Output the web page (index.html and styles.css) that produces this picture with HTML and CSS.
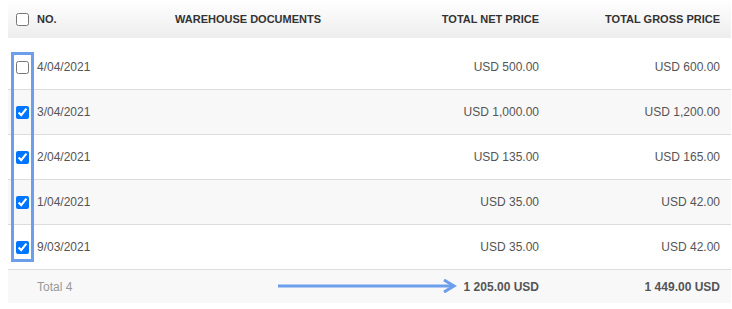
FILE: index.html
```html
<!DOCTYPE html>
<html>
<head>
<meta charset="utf-8">
<link rel="stylesheet" href="styles.css">
</head>
<body>
<div class="table">
  <div class="row head">
    <div class="cell chk"><input type="checkbox"></div>
    <div class="cell">NO.</div>
    <div class="cell">WAREHOUSE DOCUMENTS</div>
    <div class="cell num">TOTAL NET PRICE</div>
    <div class="cell num">TOTAL GROSS PRICE</div>
  </div>
  <div class="spacer"></div>
  <div class="row body">
    <div class="cell chk"><input type="checkbox"></div>
    <div class="cell">4/04/2021</div>
    <div class="cell"></div>
    <div class="cell num">USD 500.00</div>
    <div class="cell num">USD 600.00</div>
  </div>
  <div class="row body alt">
    <div class="cell chk"><input type="checkbox" checked></div>
    <div class="cell">3/04/2021</div>
    <div class="cell"></div>
    <div class="cell num">USD 1,000.00</div>
    <div class="cell num">USD 1,200.00</div>
  </div>
  <div class="row body">
    <div class="cell chk"><input type="checkbox" checked></div>
    <div class="cell">2/04/2021</div>
    <div class="cell"></div>
    <div class="cell num">USD 135.00</div>
    <div class="cell num">USD 165.00</div>
  </div>
  <div class="row body alt">
    <div class="cell chk"><input type="checkbox" checked></div>
    <div class="cell">1/04/2021</div>
    <div class="cell"></div>
    <div class="cell num">USD 35.00</div>
    <div class="cell num">USD 42.00</div>
  </div>
  <div class="row body">
    <div class="cell chk"><input type="checkbox" checked></div>
    <div class="cell">9/03/2021</div>
    <div class="cell"></div>
    <div class="cell num">USD 35.00</div>
    <div class="cell num">USD 42.00</div>
  </div>
  <div class="row foot">
    <div class="cell"></div>
    <div class="cell muted">Total 4</div>
    <div class="cell"></div>
    <div class="cell num strong">1 205.00 USD</div>
    <div class="cell num strong">1 449.00 USD</div>
  </div>
  <div class="highlight"></div>
  <svg class="arrow" width="180" height="14" viewBox="0 0 180 14">
    <line x1="0" y1="7" x2="176" y2="7" stroke="#6d9eeb" stroke-width="3"/>
    <polyline points="166,1 176,7 166,13" fill="none" stroke="#6d9eeb" stroke-width="3"/>
  </svg>
</div>
</body>
</html>
```
FILE: styles.css
```css
html, body {
  margin: 0;
  padding: 0;
  background: #fff;
}
body {
  font-family: "Liberation Sans", Arial, sans-serif;
  font-size: 12px;
  color: #555;
}
.table {
  position: relative;
  margin-left: 8px;
  width: 723px;
}
.row {
  display: grid;
  grid-template-columns: 29px 138px 200px 174px 182px;
  align-items: center;
}
.cell.num {
  text-align: right;
}
.row .cell:nth-child(4) { padding-right: 10px; }
.row .cell:nth-child(5) { padding-right: 11px; }
.head {
  height: 38px;
  background: linear-gradient(#ffffff, #ededed);
  font-size: 11px;
  font-weight: bold;
  color: #333;
}
.spacer {
  height: 7px;
}
.body {
  height: 44px;
  border-bottom: 1px solid #dcdcdc;
  background: #fff;
}
.body.alt {
  background: #f8f8f8;
}
.foot {
  height: 33px;
  background: #f8f8f8;
}
.muted {
  color: #999;
}
.strong {
  font-weight: bold;
}
.chk {
  padding-left: 8px;
  display: flex;
  align-items: center;
}
.chk input {
  margin: 0;
  width: 13px;
  height: 13px;
}
.highlight {
  position: absolute;
  left: 3px;
  top: 52px;
  width: 17px;
  height: 204px;
  border: 3px solid #6d9eeb;
}
.arrow {
  position: absolute;
  left: 270px;
  top: 279px;
}
```
